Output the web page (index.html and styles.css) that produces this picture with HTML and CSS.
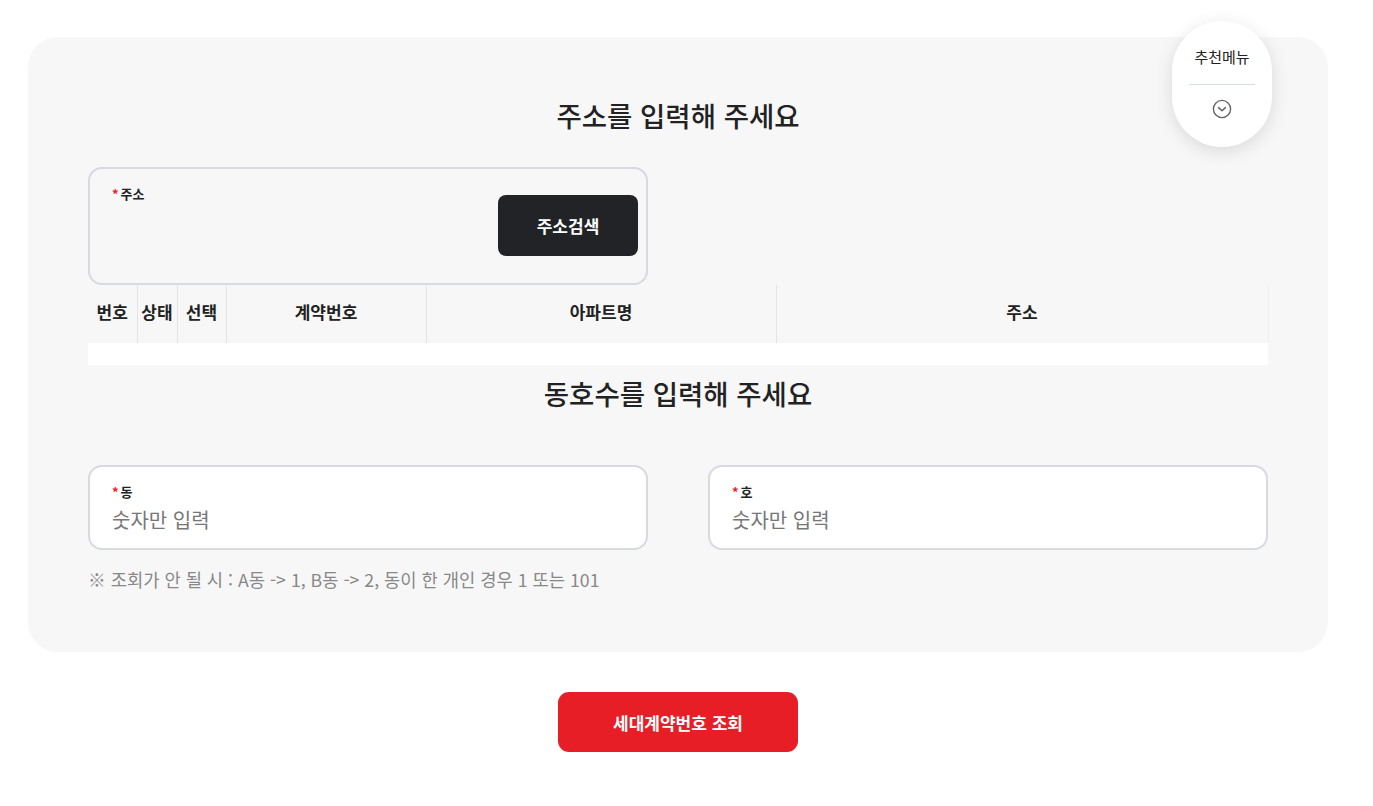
FILE: index.html
```html
<!DOCTYPE html>
<html lang="ko">
<head>
<meta charset="utf-8">
<link rel="stylesheet" href="styles.css">
</head>
<body>
<div class="page">
  <section class="panel">
    <h2 class="title">주소를 입력해 주세요</h2>
    <div class="addr-row">
      <div class="field addr">
        <div class="label"><span class="req">*</span>주소</div>
        <button class="search-btn">주소검색</button>
      </div>
    </div>
    <table class="grid">
      <thead>
        <tr>
          <th class="c1">번호</th>
          <th class="c2">상태</th>
          <th class="c3">선택</th>
          <th class="c4">계약번호</th>
          <th class="c5">아파트명</th>
          <th class="c6">주소</th>
        </tr>
      </thead>
      <tbody><tr><td colspan="6" class="empty"></td></tr></tbody>
    </table>
    <h2 class="title title2">동호수를 입력해 주세요</h2>
    <div class="pair">
      <div class="field small">
        <div class="label"><span class="req">*</span>동</div>
        <div class="ph">숫자만 입력</div>
      </div>
      <div class="field small">
        <div class="label"><span class="req">*</span>호</div>
        <div class="ph">숫자만 입력</div>
      </div>
    </div>
    <p class="note">※ 조회가 안 될 시 : A동 -&gt; 1, B동 -&gt; 2, 동이 한 개인 경우 1 또는 101</p>
  </section>
  <div class="actions">
    <button class="submit">세대계약번호 조회</button>
  </div>
  <div class="reco">
    <div class="reco-text">추천메뉴</div>
    <div class="reco-line"></div>
    <svg class="reco-icon" width="20" height="20" viewBox="0 0 20 20">
      <circle cx="10" cy="10" r="8.6" fill="none" stroke="#666" stroke-width="1.4"/>
      <path d="M6.6 8.6 L10 11.8 L13.4 8.6" fill="none" stroke="#666" stroke-width="1.5" stroke-linecap="round" stroke-linejoin="round"/>
    </svg>
  </div>
</div>
</body>
</html>
```
FILE: styles.css
```css
* { box-sizing: border-box; }
html, body { margin: 0; padding: 0; background: #fff; }
body {
  font-family: "Noto Sans CJK KR", "Noto Sans", sans-serif;
  color: #222;
}
.page {
  position: relative;
  width: 1373px;
  padding: 37px 45px 0 28px;
}
.panel {
  width: 1300px;
  background: #f7f7f8;
  border-radius: 30px;
  padding: 58px 60px 59px;
}
.title {
  margin: 0;
  text-align: center;
  font-size: 27.5px;
  font-weight: 500;
  line-height: 40px;
  color: #222;
}
.addr-row { margin-top: 32px; }
.field {
  border: 2px solid #d8d9e1;
  border-radius: 14px;
  position: relative;
}
.addr {
  width: 560px;
  height: 118px;
  padding: 16px 8px 0 22px;
  display: flex;
  justify-content: space-between;
  align-items: flex-start;
}
.label {
  font-size: 13px;
  font-weight: 700;
  line-height: 18px;
  color: #222;
}
.req { color: #e8202a; margin-right: 2px; }
.search-btn {
  margin-top: 10px;
  width: 140px;
  height: 61px;
  border: 0;
  border-radius: 8px;
  background: #222327;
  color: #fff;
  font-family: inherit;
  font-size: 17px;
  font-weight: 700;
}
.grid {
  width: 1180px;
  border-collapse: collapse;
  table-layout: fixed;
}
.grid th {
  height: 58px;
  font-size: 17px;
  font-weight: 700;
  color: #222;
  background: #f7f7f8;
  border-right: 1px solid #e3e4ea;
  padding: 0 0 6px;
  text-align: center;
}
.grid th.c6 { border-right: 1px solid #f0f0f3; }
.c1 { width: 49px; }
.c2 { width: 40px; }
.c3 { width: 49px; }
.c4 { width: 200px; }
.c5 { width: 350px; }
.c6 { width: 492px; }
.grid td.empty { height: 22px; background: #fff; padding: 0; }
.title2 { margin-top: 8px; }
.pair {
  margin-top: 52px;
  display: grid;
  grid-template-columns: 560px 560px;
  column-gap: 60px;
}
.small {
  height: 85px;
  background: #fff;
  padding: 16px 22px 0;
}
.ph {
  margin-top: 5px;
  font-size: 20px;
  line-height: 28px;
  color: #777;
  font-weight: 400;
}
.note {
  margin: 15px 0 0;
  font-size: 17.7px;
  line-height: 28px;
  color: #888;
}
.actions {
  display: flex;
  justify-content: center;
  margin-top: 40px;
  width: 1300px;
}
.submit {
  width: 240px;
  height: 60px;
  border: 0;
  border-radius: 11px;
  background: #e81e26;
  color: #fff;
  font-family: inherit;
  font-size: 17px;
  font-weight: 700;
}
.reco {
  position: absolute;
  left: 1172px;
  top: 21px;
  width: 100px;
  height: 126px;
  border-radius: 50px;
  background: #fff;
  box-shadow: 0 4px 18px rgba(0,0,0,0.12);
  display: flex;
  flex-direction: column;
  align-items: center;
  padding-top: 25px;
}
.reco-text {
  font-size: 15px;
  line-height: 22px;
  color: #222;
}
.reco-line {
  margin-top: 16px;
  width: 66px;
  height: 1px;
  background: #d9dee6;
}
.reco-icon { margin-top: 14px; }
```
